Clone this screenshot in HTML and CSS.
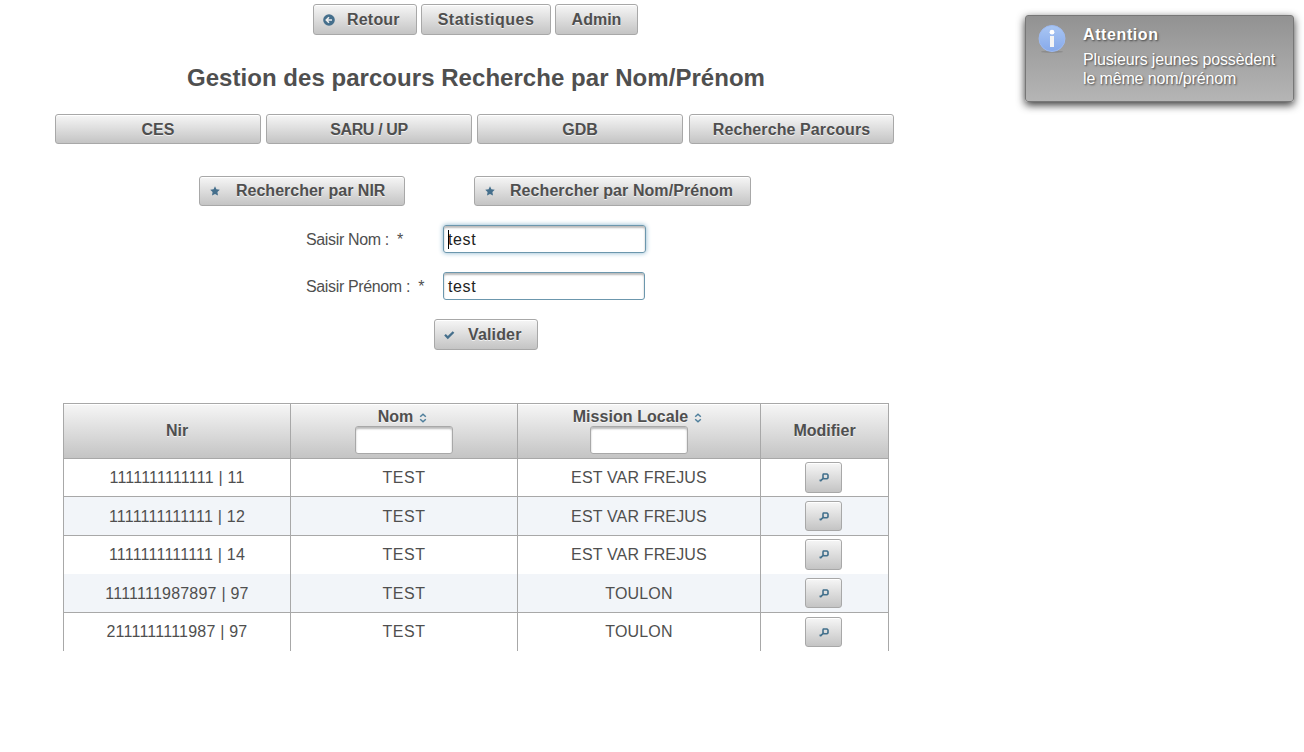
FILE: index.html
```html
<!DOCTYPE html>
<html lang="fr">
<head>
<meta charset="utf-8">
<title>Gestion des parcours</title>
<link rel="stylesheet" href="styles.css">
</head>
<body>
<svg class="defs" width="0" height="0">
  <symbol id="star" viewBox="0 0 10 10"><path d="M5 .3 6.4 3.3 9.8 3.7 7.4 6 8 9.5 5 7.9 2 9.5 2.6 6 .2 3.7 3.6 3.3Z" fill="#456f8c"/></symbol>
  <symbol id="sort" viewBox="0 0 8 10"><path d="M1.2 3.7 4 1.2 6.8 3.7M1.2 6.3 4 8.8 6.8 6.3" fill="none" stroke="#4f7f9c" stroke-width="1.5"/></symbol>
  <symbol id="lens" viewBox="0 0 10 9"><path d="M4.4 1H8L9 2V4.8L8 5.8H5L4 4.8V2ZM4.5 5.2 1.2 8.2M.5 7.4H2.8" fill="none" stroke="#42708c" stroke-width="1.6"/></symbol>
</svg>
<main class="page">
  <div class="toolbar">
    <button class="btn back"><svg class="ico" width="12" height="12" viewBox="0 0 12 12"><circle cx="6" cy="6" r="5.8" fill="#456f8c"/><path d="M9 6H3.6M6 3.3 3.3 6 6 8.7" fill="none" stroke="#eee" stroke-width="1.6"/></svg><span>Retour</span></button>
    <button class="btn stats"><span>Statistiques</span></button>
    <button class="btn admin"><span>Admin</span></button>
  </div>
  <h1 class="title">Gestion des parcours Recherche par Nom/Prénom</h1>
  <nav class="tabs">
    <button class="btn"><span>CES</span></button>
    <button class="btn saru"><span>SARU / UP</span></button>
    <button class="btn"><span>GDB</span></button>
    <button class="btn search"><span>Recherche Parcours</span></button>
  </nav>
  <div class="modes">
    <button class="btn by-nir"><svg class="ico" width="10" height="10"><use href="#star"/></svg><span>Rechercher par NIR</span></button>
    <button class="btn by-name"><svg class="ico" width="10" height="10"><use href="#star"/></svg><span>Rechercher par Nom/Prénom</span></button>
  </div>
  <form class="form">
    <label>Saisir Nom :&nbsp; *</label><div class="field focus"><i class="caret"></i>test</div>
    <label>Saisir Prénom :&nbsp; *</label><div class="field">test</div>
  </form>
  <button class="btn submit"><svg class="ico" width="12" height="10" viewBox="0 0 12 10"><path d="M2 4.8 4.8 7.6 10.5 2" fill="none" stroke="#456f8c" stroke-width="2.3"/></svg><span>Valider</span></button>
  <table class="grid">
    <colgroup><col class="c-nir"><col class="c-nom"><col class="c-ml"><col class="c-mod"></colgroup>
    <thead><tr>
      <th>Nir</th>
      <th><div class="head"><span>Nom</span><svg width="8" height="10"><use href="#sort"/></svg></div><div class="filter"></div></th>
      <th><div class="head wide"><span>Mission Locale</span><svg width="8" height="10"><use href="#sort"/></svg></div><div class="filter"></div></th>
      <th>Modifier</th>
    </tr></thead>
    <tbody>
      <tr><td class="nir">1111111111111 | 11</td><td class="nom">TEST</td><td class="ml">EST VAR FREJUS</td><td class="act"><button class="btn look tall"><svg width="10" height="9"><use href="#lens"/></svg></button></td></tr>
      <tr class="alt"><td class="nir">1111111111111 | 12</td><td class="nom">TEST</td><td class="ml">EST VAR FREJUS</td><td class="act"><button class="btn look"><svg width="10" height="9"><use href="#lens"/></svg></button></td></tr>
      <tr class="open"><td class="nir">1111111111111 | 14</td><td class="nom">TEST</td><td class="ml">EST VAR FREJUS</td><td class="act"><button class="btn look tall"><svg width="10" height="9"><use href="#lens"/></svg></button></td></tr>
      <tr class="alt"><td class="nir">1111111987897 | 97</td><td class="nom">TEST</td><td class="ml">TOULON</td><td class="act"><button class="btn look"><svg width="10" height="9"><use href="#lens"/></svg></button></td></tr>
      <tr class="open"><td class="nir">2111111111987 | 97</td><td class="nom">TEST</td><td class="ml">TOULON</td><td class="act low"><button class="btn look"><svg width="10" height="9"><use href="#lens"/></svg></button></td></tr>
    </tbody>
  </table>
</main>
<aside class="toast">
  <svg class="info" width="28" height="28" viewBox="0 0 28 28">
    <defs><linearGradient id="blue" x1="0" y1="0" x2="0" y2="1"><stop offset="0" stop-color="#a9c6f3"/><stop offset="1" stop-color="#86a9ea"/></linearGradient></defs>
    <ellipse cx="14" cy="26.8" rx="11" ry="1" fill="#777" opacity=".5"/>
    <circle cx="14" cy="13.5" r="13" fill="url(#blue)" stroke="#9dbaf0"/>
    <circle cx="14" cy="7.2" r="2.4" fill="#fff"/><rect x="12" y="11" width="4" height="11" fill="#f4f4f4"/>
  </svg>
  <div><strong>Attention</strong><p>Plusieurs jeunes possèdent<br>le même nom/prénom</p></div>
</aside>
</body>
</html>
```
FILE: styles.css
```css
* { box-sizing: border-box; }
body { margin: 0; width: 1304px; height: 752px; overflow: hidden; background: #fff; color: #4f4f4f; font: 16px/19px "Liberation Sans", Arial, sans-serif; }
.defs { position: absolute; }
.page { width: 952px; padding-top: 4px; display: flex; flex-direction: column; }
.btn { height: 30px; padding: 0; border: 1px solid #a8a8a8; border-radius: 3px; background: linear-gradient(#f6f6f6, #c4c4c4); box-shadow: inset 0 1px 0 #fff; color: #4f4f4f; font: bold 16px/19px "Liberation Sans", Arial, sans-serif; text-shadow: 0 1px 0 rgba(255,255,255,.7); display: flex; align-items: center; justify-content: center; white-space: nowrap; }
.toolbar { display: flex; gap: 4px; padding-left: 313px; }
.toolbar .btn { height: 31px; }
.back { width: 104px; justify-content: flex-start; padding-left: 9px; gap: 12px; letter-spacing: .2px; }
.stats { width: 130px; letter-spacing: .5px; }
.admin { width: 83px; }
.title { margin: 29px 0 0; padding-left: 187px; height: 28px; font-size: 24px; line-height: 28px; letter-spacing: .04px; white-space: nowrap; }
.tabs { display: flex; gap: 5px; margin-top: 22px; padding-left: 55px; }
.tabs .btn { width: 206px; }
.saru { letter-spacing: -.35px; }
.tabs .search { width: 205px; margin-left: 1px; letter-spacing: .1px; }
.modes { display: flex; gap: 69px; margin-top: 32px; padding-left: 199px; }
.modes .btn { justify-content: flex-start; padding: 0 0 1px 10px; gap: 16px; }
.by-nir { width: 206px; }
.by-name { width: 277px; letter-spacing: .07px; }
.modes .by-name { gap: 15px; }
.form { display: grid; grid-template-columns: 137px 203px; row-gap: 19px; margin: 19px 0 0 306px; }
.form label { line-height: 30px; height: 28px; letter-spacing: -.36px; white-space: nowrap; }
.field { position: relative; width: 202px; height: 28px; padding-left: 4px; border: 1px solid #6c97ad; border-radius: 3px; line-height: 28px; letter-spacing: .6px; color: #222; box-shadow: inset 0 2px 2px #bbb; }
.focus { width: 203px; box-shadow: inset 0 2px 2px #bbb, 0 0 5px #85b2cb; }
.caret { position: absolute; left: 4px; top: 4px; width: 1px; height: 19px; background: #000; }
.submit { width: 104px; height: 31px; margin: 19px 0 0 434px; justify-content: flex-start; padding-left: 8px; gap: 13px; letter-spacing: .15px; }
.grid { width: 826px; margin: 53px 0 0 63px; table-layout: fixed; border-spacing: 0; text-align: center; }
.c-nir { width: 228px; }
.c-nom { width: 227px; }
.c-ml { width: 243px; }
.c-mod { width: 128px; }
.grid th, .grid td { padding: 0; border: 0 solid #a8a8a8; border-width: 0 1px 1px 0; }
.grid th:first-child, .grid td:first-child { border-left-width: 1px; }
.grid th { height: 56px; padding-bottom: 2px; border-top-width: 1px; background: linear-gradient(#f6f6f6, #c4c4c4); box-shadow: inset 0 1px 0 #fff; text-shadow: 0 1px 0 rgba(255,255,255,.7); }
.head { display: flex; align-items: center; justify-content: center; gap: 6px; height: 19px; padding-right: 3px; }
.head svg { margin-top: 4px; }
.wide { letter-spacing: .06px; }
.filter { width: 98px; height: 28px; margin: 0 auto; border: 1px solid #a8a8a8; border-radius: 3px; background: #fff; box-shadow: inset 0 2px 2px #bbb; }
.grid td { height: 38px; vertical-align: middle; }
.grid .alt td { height: 39px; background: #f2f5f9; }
.grid .open td { padding-bottom: 1px; border-bottom-width: 0; }
.grid .open .low { padding-bottom: 0; }
.nir { letter-spacing: .22px; }
.nom { letter-spacing: .55px; }
.ml { letter-spacing: .15px; }
.grid .act { padding-right: 2px; }
.look { width: 37px; margin: 0 auto; }
.tall { height: 31px; }
.toast { position: absolute; left: 1025px; top: 15px; width: 269px; height: 87px; display: flex; gap: 17px; padding: 9px 0 0 12px; border: 1px solid #777; border-radius: 3px; background: linear-gradient(#929292, #b5b5b5); box-shadow: 0 3px 8px #000c; color: #fff; text-shadow: 1px 1px 2px #444; }
.toast strong { display: block; letter-spacing: .6px; }
.toast p { margin: 6px 0 0; letter-spacing: -.14px; white-space: nowrap; }
.info { flex: none; }
```
